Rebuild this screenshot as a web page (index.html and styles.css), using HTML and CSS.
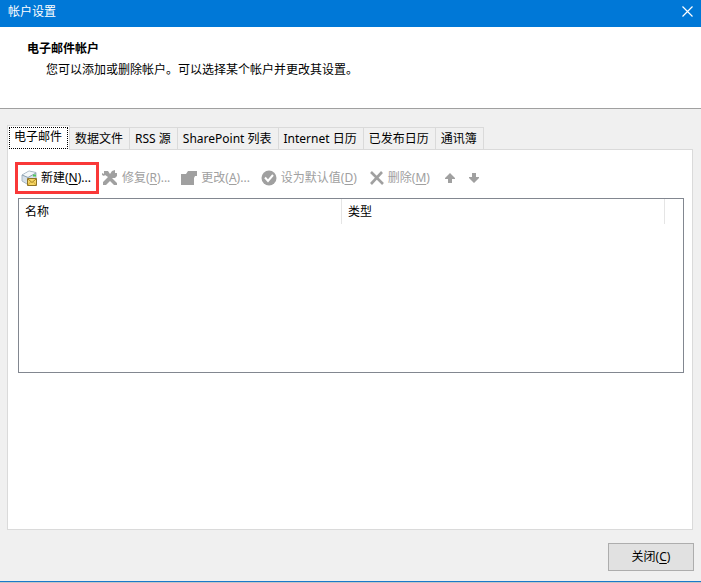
FILE: index.html
```
<!DOCTYPE html>
<html lang="zh-CN">
<head>
    <meta charset="UTF-8">
    <meta name="viewport" content="width=device-width, initial-scale=1.0">
    <title>帐户设置</title>
    <link rel="stylesheet" href="styles.css">
</head>
<body>
    <header class="titlebar">
        <span>帐户设置</span>
        <button class="close" type="button" aria-label="关闭窗口">
            <svg width="11" height="11" viewBox="0 0 11 11"><path d="M0.5 0.5l10 10M10.5 0.5l-10 10" stroke="#fff" stroke-width="1.2"/></svg>
        </button>
    </header>

    <section class="banner">
        <h1>电子邮件帐户</h1>
        <p>您可以添加或删除帐户。可以选择某个帐户并更改其设置。</p>
    </section>

    <main class="content">
        <div class="tabs" role="tablist">
            <button class="tab active" type="button" role="tab" aria-selected="true"><span>电子邮件</span></button>
            <button class="tab" type="button" role="tab">数据文件</button>
            <button class="tab" type="button" role="tab">RSS 源</button>
            <button class="tab" type="button" role="tab">SharePoint 列表</button>
            <button class="tab" type="button" role="tab">Internet 日历</button>
            <button class="tab" type="button" role="tab">已发布日历</button>
            <button class="tab" type="button" role="tab">通讯簿</button>
        </div>

        <div class="panel" role="tabpanel">
            <div class="toolbar">
                <button class="tool highlight" type="button">
                    <svg width="17" height="17" viewBox="0 0 17 17">
                        <path d="M1 5L8 1l7 1.500v8L6 14l-5-3z" fill="#d5dfe7" stroke="#a9b8c4"/>
                        <path d="M2 5l6-3.500 6 1.500-7 4z" fill="#f4f8fa"/>
                        <path d="M1 5l6 2.500 8-4.500" fill="none" stroke="#8fa3b3"/>
                        <path d="M12 5.500h3" stroke="#4fc95c" stroke-width="2"/>
                        <path d="M6.5 8.5h9v7h-9z" fill="#f6d765" stroke="#8f7426"/>
                        <path d="M7 9l4 3.500L15 9" fill="none" stroke="#a3801d"/>
                        <path d="M7 15l2.500-3M15 15l-2.500-3" fill="none" stroke="#d3a93b"/>
                    </svg>
                    <span>新建(<u>N</u>)...</span>
                </button>
                <button class="tool" type="button" disabled>
                    <svg width="16" height="16" viewBox="0 0 16 16" fill="#a0a0a0">
                        <path d="M2 1h4l2 3 2-3 3-1v3h2v3l-2 2h-3l5 5v2h-3l-4-4-4 4H1v-3l5-5-3-2-1 1-2-1V3l2 1z"/>
                    </svg>
                    <span>修复(<u>R</u>)...</span>
                </button>
                <button class="tool" type="button" disabled>
                    <svg width="16" height="16" viewBox="0 0 16 16" fill="#a0a0a0">
                        <path d="M0 4h5l2-3h9v5h-2l-1 2v7H0z"/>
                    </svg>
                    <span>更改(<u>A</u>)...</span>
                </button>
                <button class="tool" type="button" disabled>
                    <svg width="16" height="16" viewBox="0 0 16 16">
                        <circle cx="8" cy="8" r="7.5" fill="#a0a0a0"/>
                        <path d="M4 7.5l3 3.5 5-6" fill="none" stroke="#fff" stroke-width="2"/>
                    </svg>
                    <span>设为默认值(<u>D</u>)</span>
                </button>
                <button class="tool" type="button" disabled>
                    <svg width="16" height="16" viewBox="0 0 16 16">
                        <path d="M3 2l12 12M14 2L3 14" fill="none" stroke="#a0a0a0" stroke-width="2.6"/>
                    </svg>
                    <span>删除(<u>M</u>)</span>
                </button>
                <div class="arrows">
                    <button class="tool" type="button" aria-label="上移" disabled>
                        <svg width="10" height="10" viewBox="0 0 10 10" fill="#a0a0a0"><path d="M5 0l5 5v1H7v4H3V6H0V5z"/></svg>
                    </button>
                    <button class="tool" type="button" aria-label="下移" disabled>
                        <svg width="10" height="10" viewBox="0 0 10 10" fill="#a0a0a0"><path d="M5 10L0 5V4h3V0h4v4h3v1z"/></svg>
                    </button>
                </div>
            </div>

            <div class="list">
                <table>
                    <thead>
                        <tr>
                            <th>名称</th>
                            <th>类型</th>
                            <td class="col-rest"></td>
                        </tr>
                    </thead>
                </table>
            </div>
        </div>
    </main>

    <footer class="footer">
        <button class="btn" type="button">关闭(<u>C</u>)</button>
    </footer>
</body>
</html>
```

FILE: styles.css
```
* {
    box-sizing: border-box;
}
body {
    margin: 0;
    min-height: 100vh;
    display: flex;
    flex-direction: column;
    background: #f0f0f0;
    border-bottom: 1px solid #c4c4c4;
    color: #000;
    font-family: "Noto Sans", "Noto Sans CJK SC", sans-serif;
    font-size: 12px;
    line-height: 18px;
}
button {
    font: inherit;
    color: inherit;
    margin: 0;
    padding: 0;
    border: none;
    background: none;
    white-space: nowrap;
}
svg {
    display: block;
    flex: none;
}
u {
    text-underline-offset: 2px;
}
.titlebar {
    display: flex;
    align-items: center;
    justify-content: space-between;
    height: 27px;
    padding: 0 8px 4px;
    background: #0078d7;
    color: #fff;
}
.banner {
    height: 82px;
    padding: 13px 27px;
    background: #fff;
    border-bottom: 1px solid #a0a0a0;
}
.banner h1 {
    margin: 0 0 3px;
    font-size: 12px;
    line-height: 18px;
}
.banner p {
    margin: 0 0 0 19px;
}
.content {
    flex: 1;
    display: flex;
    flex-direction: column;
    padding: 16px 8px 0 7px;
}
.tabs {
    display: flex;
    align-items: flex-end;
}
.tab {
    height: 22px;
    padding: 0 6px 0 5px;
    border: 1px solid #dadada;
    border-width: 1px 1px 0 0;
}
.tab.active {
    height: 25px;
    margin-bottom: -1px;
    padding: 1px;
    border-left-width: 1px;
    background: #fff;
    position: relative;
}
.tab.active span {
    display: block;
    height: 22px;
    padding: 0 5px 0 4px;
    border: 1px dotted #000;
}
.panel {
    flex: 1;
    padding: 12px 8px 0 7px;
    background: #fff;
    border: 1px solid #dadada;
}
.toolbar {
    display: flex;
    align-items: center;
    gap: 11px;
}
.tool {
    display: flex;
    align-items: center;
    gap: 4px;
}
.tool:disabled {
    color: #a0a0a0;
}
.tool.highlight {
    height: 32px;
    padding: 0 5px 0 3px;
    gap: 3px;
    border: 3px solid #f93838;
    margin-right: -8px;
}
.arrows {
    display: flex;
    gap: 14px;
    padding-left: 4px;
}
.list {
    height: 175px;
    margin: 4px 0 0 3px;
    border: 1px solid #828790;
}
.list table {
    width: 100%;
    border-collapse: collapse;
    table-layout: fixed;
}
.list th,
.list td {
    height: 25px;
    padding: 0 6px;
    text-align: left;
    font-weight: normal;
    border-right: 1px solid #e5e5e5;
}
.list .col-rest {
    width: 19px;
    padding: 0;
    border-right: none;
}
.footer {
    display: flex;
    justify-content: flex-end;
    padding: 13px 7px 10px;
    border-bottom: 1px solid #1979ca;
}
.btn {
    width: 86px;
    height: 28px;
    background: #e1e1e1;
    border: 1px solid #adadad;
}
```
